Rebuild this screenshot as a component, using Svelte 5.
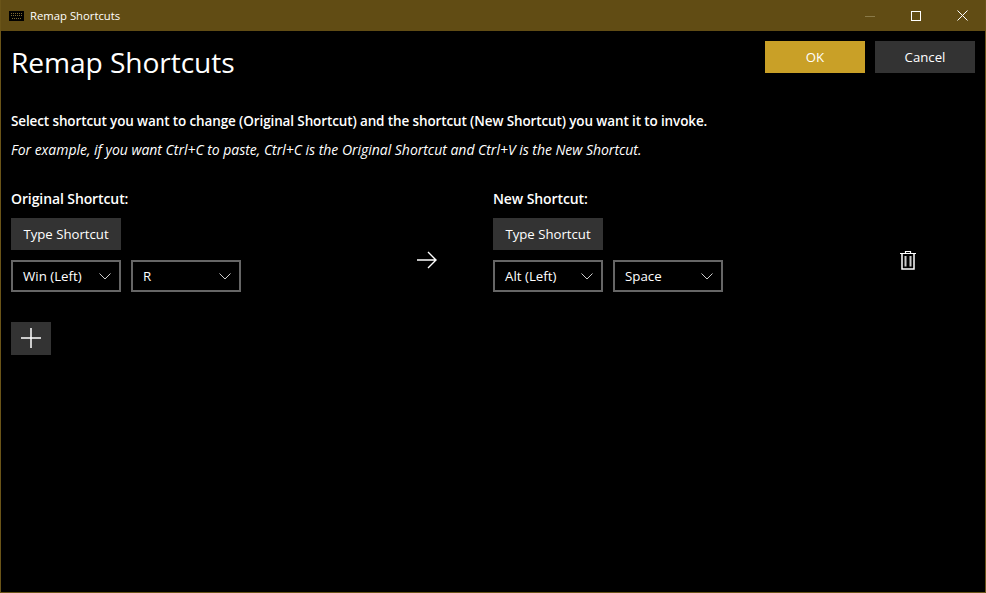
<script>
    // Rows of the remap table, just the one shortcut for now
    let rows = [
        { from: ['Win (Left)', 'R'], to: ['Alt (Left)', 'Space'] }
    ];
</script>

<style>
    :global(body) {
        margin: 0;
        background: #000;
    }

    .window {
        box-sizing: border-box;
        width: 986px;
        height: 593px;
        border: 1px solid #6a5418;
        border-top: 0;
        background: #000;
        color: #fff;
        font-family: "Open Sans", "Noto Sans", sans-serif;
        font-size: 14px;
        overflow: hidden;
    }

    .titlebar {
        height: 31px;
        margin: 0 -1px;
        background: #614c14;
        display: flex;
        align-items: center;
        padding: 0 1px 0 9px;
        font-size: 11.3px;
    }

    .titlebar .name {
        margin-left: 6px;
        flex: 1;
    }

    .caption {
        display: flex;
        height: 100%;
    }

    .caption div {
        width: 46px;
        display: flex;
        align-items: center;
        justify-content: center;
    }

    .content {
        padding: 10px 10px 0;
    }

    .header {
        display: flex;
        justify-content: space-between;
        height: 32px;
    }

    h1 {
        margin: 0;
        font-size: 28.2px;
        font-weight: 400;
        line-height: 42px;
        letter-spacing: -0.1px;
    }

    .actions {
        display: flex;
        gap: 10px;
    }

    button {
        font-family: inherit;
        font-size: 13.2px;
        color: #fff;
        background: #333;
        border: 0;
        padding: 0;
        margin: 0;
    }

    .actions button {
        width: 100px;
        height: 32px;
    }

    .actions .ok {
        background: #c9a027;
    }

    .intro {
        margin: 38px 0 0;
        font-size: 13.5px;
        font-weight: 600;
        line-height: 20px;
        letter-spacing: -0.12px;
    }

    .example {
        margin: 9px 0 0;
        font-size: 14px;
        font-style: italic;
        line-height: 20px;
        letter-spacing: -0.02px;
    }

    .table {
        margin-top: 29px;
        display: grid;
        grid-template-columns: 396px 86px 395px 40px;
    }

    .label {
        font-size: 14px;
        font-weight: 600;
        line-height: 20px;
        letter-spacing: -0.1px;
        margin-bottom: 9px;
    }

    .type {
        display: block;
        width: 110px;
        height: 32px;
        margin-bottom: 10px;
    }

    .keys {
        display: flex;
        gap: 10px;
    }

    .key {
        box-sizing: border-box;
        width: 110px;
        height: 32px;
        border: 2px solid #666;
        display: flex;
        align-items: center;
        justify-content: space-between;
        padding: 0 8px 0 10px;
        font-size: 13.3px;
    }

    .arrow {
        display: flex;
        align-items: flex-start;
        padding: 62px 0 0 10px;
    }

    .remove {
        display: flex;
        align-items: flex-start;
        justify-content: center;
        padding-top: 61px;
    }

    .add {
        display: flex;
        align-items: center;
        justify-content: center;
        box-sizing: border-box;
        width: 40px;
        height: 33px;
        padding-bottom: 1px;
        margin-top: 30px;
    }
</style>

<div class="window">
    <div class="titlebar">
        <svg width="15" height="10" viewBox="0 0 15 10">
            <rect x="0.5" y="0.5" width="14" height="9" fill="#000" stroke="#000" />
            <path d="M2 2.5h11M2 4.5h11M3 7.5h9" stroke="#7d6a32" stroke-width="1" stroke-dasharray="1 1" />
        </svg>
        <span class="name">Remap Shortcuts</span>
        <div class="caption">
            <div>
                <svg width="10" height="10" viewBox="0 0 10 10"><path d="M0 5.5h10" stroke="#8a7a48" /></svg>
            </div>
            <div>
                <svg width="10" height="10" viewBox="0 0 10 10"><rect x="0.5" y="0.5" width="9" height="9" fill="none" stroke="#fff" /></svg>
            </div>
            <div>
                <svg width="11" height="11" viewBox="0 0 11 11"><path d="M0.5 0.5l10 10M10.5 0.5l-10 10" stroke="#fff" /></svg>
            </div>
        </div>
    </div>

    <div class="content">
        <div class="header">
            <h1>Remap Shortcuts</h1>
            <div class="actions">
                <button class="ok">OK</button>
                <button>Cancel</button>
            </div>
        </div>

        <p class="intro">Select shortcut you want to change (Original Shortcut) and the shortcut (New Shortcut) you want it to invoke.</p>
        <p class="example">For example, if you want Ctrl+C to paste, Ctrl+C is the Original Shortcut and Ctrl+V is the New Shortcut.</p>

        {#each rows as row}
            <div class="table">
                <div>
                    <div class="label">Original Shortcut:</div>
                    <button class="type">Type Shortcut</button>
                    <div class="keys">
                        {#each row.from as key}
                            <div class="key">
                                <span>{key}</span>
                                <svg width="12" height="7" viewBox="0 0 12 7"><path d="M0.5 0.5L6 6l5.5-5.5" fill="none" stroke="#ccc" /></svg>
                            </div>
                        {/each}
                    </div>
                </div>
                <div class="arrow">
                    <svg width="20" height="18" viewBox="0 0 20 18"><path d="M0 9h19M11 1l8 8-8 8" fill="none" stroke="#fff" stroke-width="1.4" /></svg>
                </div>
                <div>
                    <div class="label">New Shortcut:</div>
                    <button class="type">Type Shortcut</button>
                    <div class="keys">
                        {#each row.to as key}
                            <div class="key">
                                <span>{key}</span>
                                <svg width="12" height="7" viewBox="0 0 12 7"><path d="M0.5 0.5L6 6l5.5-5.5" fill="none" stroke="#ccc" /></svg>
                            </div>
                        {/each}
                    </div>
                </div>
                <div class="remove">
                    <svg width="16" height="20" viewBox="0 0 16 20" fill="none" stroke="#fff">
                        <path d="M0 3.5h16M5.5 3V1.5h5V3" stroke-width="1.2" />
                        <path d="M2 3.5v15.5h12V3.5" stroke-width="1.5" />
                        <path d="M5.5 6v10.5M10.5 6v10.5" stroke-width="2" stroke="#ccc" />
                    </svg>
                </div>
            </div>
        {/each}

        <button class="add" aria-label="Add shortcut">
            <svg width="20" height="20" viewBox="0 0 20 20"><path d="M10 0v20M0 10h20" stroke="#fff" stroke-width="1.5" /></svg>
        </button>
    </div>
</div>
